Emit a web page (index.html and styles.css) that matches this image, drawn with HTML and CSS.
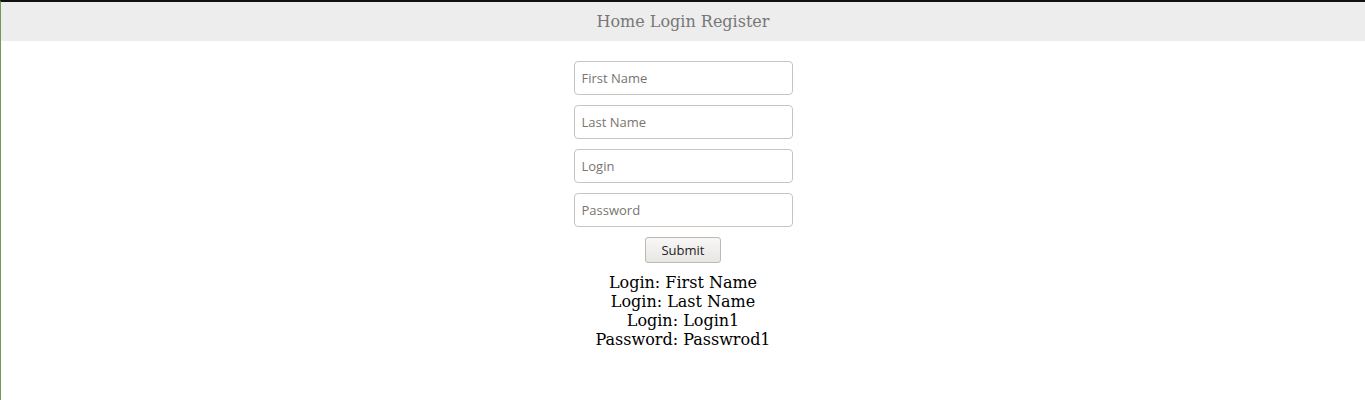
FILE: index.html
```html
<!DOCTYPE html>
<html>
<head>
<meta charset="utf-8">
<link rel="stylesheet" href="styles.css">
</head>
<body>
<div class="page">
  <nav class="nav">Home Login Register</nav>
  <form class="form">
    <input class="field" type="text" placeholder="First Name">
    <input class="field" type="text" placeholder="Last Name">
    <input class="field" type="text" placeholder="Login">
    <input class="field" type="password" placeholder="Password">
    <button class="submit" type="button">Submit</button>
  </form>
  <div class="result">
    <div>Login: First Name</div>
    <div>Login: Last Name</div>
    <div>Login: Login1</div>
    <div>Password: Passwrod1</div>
  </div>
</div>
</body>
</html>
```
FILE: styles.css
```css
html, body {
  margin: 0;
  padding: 0;
  background: #fff;
}
.page {
  border-top: 2px solid #111;
  border-left: 1px solid #6f9a58;
  min-height: 100vh;
  box-sizing: border-box;
  font-family: "DejaVu Serif", serif;
}
.nav {
  background: #ededed;
  height: 39px;
  line-height: 39px;
  text-align: center;
  color: #777;
  font-size: 16px;
}
.form {
  display: flex;
  flex-direction: column;
  align-items: center;
  gap: 10px;
  margin-top: 20px;
}
.field {
  width: 219px;
  height: 34px;
  box-sizing: border-box;
  border: 1px solid #c8c4c0;
  border-radius: 4px;
  padding: 0 7px;
  font-family: "Open Sans", "DejaVu Sans", sans-serif;
  font-size: 13px;
  color: #333;
  background: #fff;
}
.field::placeholder {
  color: #7a7470;
}
.submit {
  width: 76px;
  height: 26px;
  border: 1px solid #bdb8b3;
  border-radius: 3px;
  background: linear-gradient(#f8f7f6, #e8e6e3);
  font-family: "Open Sans", "DejaVu Sans", sans-serif;
  font-size: 13px;
  color: #222;
  padding: 0;
}
.result {
  margin-top: 10px;
  text-align: center;
  font-size: 16px;
  line-height: 19px;
  color: #000;
}
```
